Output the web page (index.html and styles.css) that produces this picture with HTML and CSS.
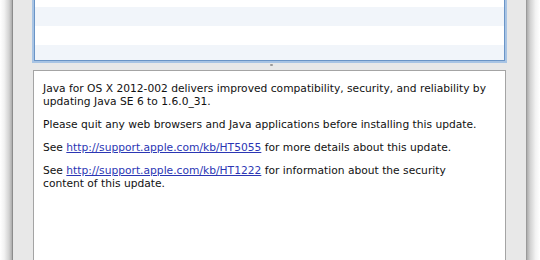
FILE: index.html
```
<!DOCTYPE html>
<html>
<head>
<meta charset="utf-8">
<link rel="stylesheet" href="styles.css">
</head>
<body>
<div class="screen">
  <div class="shadow shadow-left"></div>
  <div class="window">
    <div class="list">
      <div class="row row-top"></div>
      <div class="row alt"></div>
      <div class="row"></div>
      <div class="row alt row-last"></div>
    </div>
    <div class="splitter"><span class="dimple"></span></div>
    <div class="notes">
      <p>Java for OS X 2012-002 delivers improved compatibility, security, and reliability by updating Java SE 6 to 1.6.0_31.</p>
      <p>Please quit any web browsers and Java applications before installing this update.</p>
      <p>See <a href="#">http://support.apple.com/kb/HT5055</a> for more details about this update.</p>
      <p>See <a href="#">http://support.apple.com/kb/HT1222</a> for information about the security<br>content of this update.</p>
    </div>
  </div>
  <div class="shadow shadow-right"></div>
</div>
</body>
</html>
```
FILE: styles.css
```
html, body {
  margin: 0;
  padding: 0;
  background: #ffffff;
  width: 540px;
  height: 260px;
  overflow: hidden;
}

.screen {
  display: flex;
  width: 540px;
  height: 260px;
}

.shadow {
  height: 100%;
}

.shadow-left {
  width: 12px;
  background: linear-gradient(to right, #ffffff 0%, #f2f2f2 35%, #d2d2d2 75%, #acacac 100%);
}

.shadow-right {
  width: 13px;
  background: linear-gradient(to left, #ffffff 0%, #f2f2f2 35%, #d2d2d2 75%, #acacac 100%);
}

.window {
  flex: 1;
  display: flex;
  flex-direction: column;
  background: #e8e8e8;
  border-left: 1px solid #8c8c8c;
  border-right: 1px solid #9a9a9a;
  padding: 0 20px 0 20px;
}

.list {
  display: flex;
  flex-direction: column;
  margin: 0 1px;
  background: #ffffff;
  border: 1px solid #6a94c6;
  border-top: 0;
  box-shadow: 0 0 0 2px #a8c4e4;
}

.row {
  height: 19px;
  background: #ffffff;
}

.row.alt {
  background: #f1f5fa;
}

.row-top {
  height: 7px;
}

.row-last {
  height: 15px;
}

.splitter {
  height: 9px;
  display: flex;
  justify-content: center;
  align-items: flex-start;
}

.dimple {
  width: 3px;
  height: 2px;
  margin-top: 3px;
  margin-left: 3px;
  background: #9a9a9a;
  border-radius: 1px;
}

.notes {
  flex: 1;
  background: #ffffff;
  border: 1px solid #a4a4a4;
  border-bottom: 0;
  padding: 11px 8px 0 9px;
  font-family: "DejaVu Sans", sans-serif;
  font-size: 10.7px;
  line-height: 13px;
  color: #111111;
}

.notes p {
  margin: 0 0 10px 0;
}

.notes a {
  color: #2b36b4;
  text-decoration: underline;
}
```
